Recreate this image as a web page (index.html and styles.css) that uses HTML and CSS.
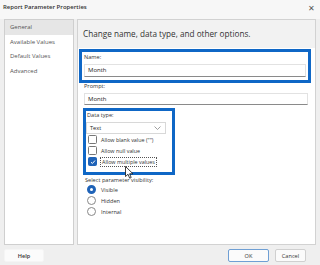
FILE: index.html
```html
<html>
	<head>
		<title>Report Parameter Properties</title>
		<meta charset="utf-8"/>
		<link rel="stylesheet" href="styles.css">
	</head>
	<body>
		<div class="dialog">
			<div class="titlebar">
				<span class="title">Report Parameter Properties</span>
				<span class="close">✕</span>
			</div>
			<div class="main">
				<div class="nav">
					<div class="navitem selected">General</div>
					<div class="navitem">Available Values</div>
					<div class="navitem">Default Values</div>
					<div class="navitem">Advanced</div>
				</div>
				<div class="content">
					<div class="heading">Change name, data type, and other options.</div>
					<div class="body">
						<div class="hl namebox">
							<div class="label">Name:</div>
							<div class="input">Month</div>
						</div>
						<div class="label prompt">Prompt:</div>
						<div class="input">Month</div>
						<div class="hl typebox">
							<div class="label">Data type:</div>
							<div class="select">
								<span>Text</span>
								<svg width="7" height="4" viewBox="0 0 7 4"><path d="M0.5 0.5 L3.5 3.5 L6.5 0.5" fill="none" stroke="#888" stroke-width="0.8"/></svg>
							</div>
							<div class="check"><span class="box"></span>Allow blank value ("")</div>
							<div class="check"><span class="box"></span>Allow null value</div>
							<div class="check"><span class="box on"><svg width="6" height="6" viewBox="0 0 6 6"><path d="M1 3.2 L2.4 4.5 L5 1.5" fill="none" stroke="#fff" stroke-width="1"/></svg></span><span class="focus">Allow multiple values</span></div>
							<svg class="cursor" width="9" height="13" viewBox="0 0 9 13"><path d="M0.5 0.5 L0.5 10.5 L3 8.3 L4.7 12.2 L6.2 11.5 L4.6 7.8 L8 7.8 Z" fill="#fff" stroke="#111" stroke-width="0.8"/></svg>
						</div>
						<div class="label vis">Select parameter visibility:</div>
						<div class="radio"><span class="dot on"></span>Visible</div>
						<div class="radio"><span class="dot"></span>Hidden</div>
						<div class="radio"><span class="dot"></span>Internal</div>
					</div>
				</div>
			</div>
			<div class="footer">
				<div class="btn help">Help</div>
				<div class="right">
					<div class="btn ok">OK</div>
					<div class="btn">Cancel</div>
				</div>
			</div>
		</div>
	</body>
</html>
```

FILE: styles.css
```css
body {
	margin: 0;
	background-color: #efefef;
	font-family: "Open Sans", "Noto Sans", sans-serif;
	color: #222;
}

.dialog {
	width: 320px;
	height: 265px;
	overflow: hidden;
}

.titlebar {
	height: 19px;
	display: flex;
	justify-content: space-between;
	align-items: flex-start;
	background-color: #f7f7f7;
}

.title {
	font-size: 6px;
	font-weight: 600;
	padding-left: 3px;
	padding-top: 3px;
	color: #333;
}

.close {
	font-size: 8px;
	color: #555;
	padding-right: 5px;
	padding-top: 2px;
}

.main {
	display: flex;
	gap: 3px;
	padding: 0 4px;
	height: 226px;
}

.nav {
	width: 68px;
	background-color: #fff;
	border: 1px solid #cfcfcf;
	font-size: 6px;
	color: #555;
}

.navitem {
	height: 14.5px;
	line-height: 14.5px;
	padding-left: 5px;
}

.navitem.selected {
	background-color: #e6e6e6;
}

.content {
	flex: 1;
	background-color: #fff;
	border: 1px solid #d2d2d2;
	display: flex;
	flex-direction: column;
}

.heading {
	height: 28px;
	line-height: 28px;
	background-color: #f2f2f2;
	font-size: 8.2px;
	color: #333;
	padding-left: 5px;
}

.body {
	padding: 1px 4px 0 1px;
	font-size: 6px;
}

.hl {
	border: 3px solid #0f67c6;
}

.namebox {
	height: 28px;
	padding: 0 2px;
}

.label {
	height: 10px;
	line-height: 11px;
	font-size: 5.6px;
	color: #333;
}

.input {
	line-height: 11px;
	margin-top: 2px;
	border: 1px solid #e2e2e2;
	border-bottom-color: #8a8a8a;
	font-size: 6px;
	padding-left: 3px;
	background-color: #fff;
	box-sizing: border-box;
	height: 13px;
}

.prompt {
	height: 8px;
	line-height: 7px;
	margin-left: 5px;
}

.body > .input {
	margin-left: 5px;
	margin-right: 3px;
	margin-top: 2px;
	height: 12px;
	line-height: 10px;
}

.typebox {
	width: 86px;
	height: 61px;
	margin-top: 3px;
	margin-left: 4px;
	position: relative;
}

.typebox .label {
	height: 9px;
	line-height: 8px;
	padding-left: 1px;
}

.select {
	height: 12px;
	margin-top: 2px;
	border: 1px solid #d8d8d8;
	box-sizing: border-box;
	width: 80px;
	display: flex;
	align-items: center;
	justify-content: space-between;
	padding: 0 4px 0 3px;
	font-size: 5.6px;
}

.check {
	height: 11px;
	display: flex;
	align-items: center;
	font-size: 5.4px;
	color: #333;
}

.check:first-of-type {
	margin-top: 1px;
}

.box {
	width: 7px;
	height: 7px;
	border: 1px solid #777;
	border-radius: 1.5px;
	margin-left: 2px;
	margin-right: 4px;
	display: flex;
	align-items: center;
	justify-content: center;
	background-color: #fff;
}

.box.on {
	background-color: #1f63b8;
	border-color: #1f63b8;
}

.focus {
	outline: 1px dotted #555;
	padding: 0 1px;
}

.cursor {
	position: absolute;
	left: 39px;
	top: 55px;
}

.vis {
	height: 8px;
	line-height: 8px;
	margin-left: 6px;
	margin-top: 1px;
}

.radio {
	height: 11px;
	display: flex;
	align-items: center;
	margin-left: 8px;
	font-size: 5.6px;
	color: #333;
}

.radio:first-of-type {
	margin-top: 3px;
}

.dot {
	width: 7px;
	height: 7px;
	border: 1px solid #888;
	border-radius: 50%;
	margin-right: 5px;
}

.dot.on {
	width: 3px;
	height: 3px;
	border: 3px solid #1f63b8;
	background-color: #fff;
}

.footer {
	display: flex;
	justify-content: space-between;
	padding: 4px 14px 0 4px;
}

.right {
	display: flex;
	gap: 6px;
}

.btn {
	width: 31px;
	height: 13px;
	line-height: 12px;
	text-align: center;
	font-size: 5.6px;
	background-color: #fbfbfb;
	border: 1px solid #d0d0d0;
	border-radius: 2px;
	box-sizing: border-box;
	color: #333;
}

.help {
	width: 40px;
	border-color: #f5f5f5;
	font-weight: 600;
}

.ok {
	width: 41px;
	border-color: #6f9fd4;
}
```
